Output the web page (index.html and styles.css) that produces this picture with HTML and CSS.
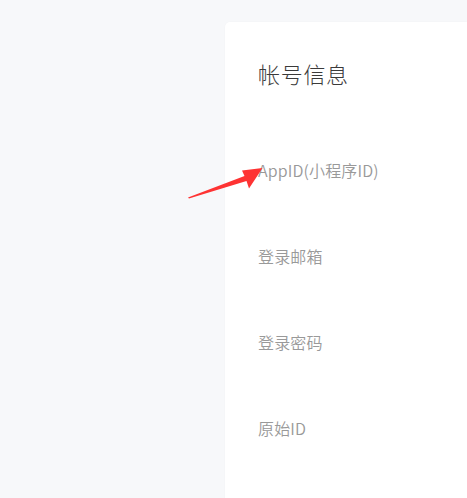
FILE: index.html
```html
<!DOCTYPE html>
<html lang="zh">
<head>
<meta charset="utf-8">
<link rel="stylesheet" href="styles.css">
</head>
<body>
<div class="page">
  <div class="card">
    <h2 class="title">帐号信息</h2>
    <div class="row">AppID(小程序ID)</div>
    <div class="row">登录邮箱</div>
    <div class="row">登录密码</div>
    <div class="row">原始ID</div>
  </div>
  <svg class="arrow" width="467" height="498" viewBox="0 0 467 498">
    <polygon points="188,197.5 244.5,176 242,170.5 262.5,168 249,188.5 246.5,181 189,198.5" fill="#fe3333"/>
  </svg>
</div>
</body>
</html>
```

FILE: styles.css
```css
html, body {
  margin: 0;
  padding: 0;
  background: #f7f8fa;
  font-family: "Noto Sans CJK SC", "Noto Sans", sans-serif;
}
.page {
  position: relative;
  width: 467px;
  height: 498px;
  overflow: hidden;
  padding: 22px 0 0 225px;
  box-sizing: border-box;
}
.card {
  background: #fff;
  border-radius: 5px 0 0 0;
  height: 520px;
  padding: 36px 0 0 33px;
  box-sizing: border-box;
  box-shadow: 0 0 2px rgba(0,0,0,0.03);
}
.title {
  margin: 0 0 40px 0;
  font-size: 22px;
  font-weight: 300;
  letter-spacing: 0.7px;
  line-height: 30px;
  color: #3a3a3a;
}
.row {
  height: 86px;
  line-height: 84px;
  font-size: 16px;
  font-weight: 350;
  letter-spacing: 0.15px;
  color: #999;
}
.arrow {
  position: absolute;
  left: 0;
  top: 0;
}
```
